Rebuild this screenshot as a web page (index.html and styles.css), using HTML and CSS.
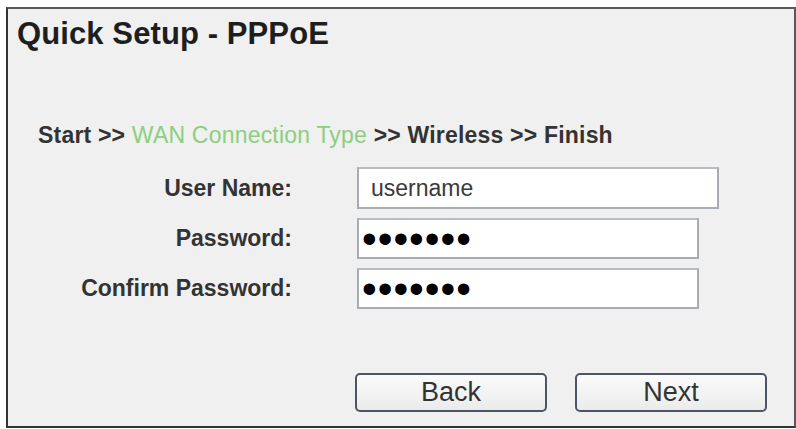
FILE: index.html
```html
<!DOCTYPE html>
<html>
<head>
<meta charset="utf-8">
<title>Quick Setup - PPPoE</title>
<link rel="stylesheet" href="styles.css">
</head>
<body>
<div class="panel">
  <h1 class="title">Quick Setup - PPPoE</h1>
  <p class="steps">Start &gt;&gt; <span class="current">WAN Connection Type</span> &gt;&gt; Wireless &gt;&gt; Finish</p>
  <div class="form">
    <label class="label">User Name:</label>
    <div class="field field-wide">username</div>
    <label class="label">Password:</label>
    <div class="field field-dots">•••••••</div>
    <label class="label">Confirm Password:</label>
    <div class="field field-dots">•••••••</div>
  </div>
  <div class="actions">
    <button class="btn" type="button">Back</button>
    <button class="btn" type="button">Next</button>
  </div>
</div>
</body>
</html>
```

FILE: styles.css
```css
html, body {
  margin: 0;
  padding: 0;
  background: #ffffff;
}

body {
  font-family: "Liberation Sans", Arial, sans-serif;
  color: #333333;
}

.panel {
  box-sizing: border-box;
  width: 790px;
  height: 421px;
  margin: 7px 0 0 6px;
  background: #f0f0f0;
  border: 2px solid #5a5a5a;
  border-left-color: #333333;
  border-bottom-color: #333333;
}

.title {
  margin: 0;
  padding: 7px 0 0 9px;
  font-size: 31px;
  line-height: 36px;
  font-weight: bold;
  letter-spacing: 0.1px;
  color: #1e1e1e;
}

.steps {
  margin: 70px 0 0 30px;
  font-size: 23px;
  line-height: 26px;
  font-weight: bold;
  letter-spacing: 0.2px;
  color: #333333;
}

.steps .current {
  font-weight: normal;
  color: #8ccf7e;
}

.form {
  display: grid;
  grid-template-columns: 284px auto;
  column-gap: 65px;
  row-gap: 9px;
  align-items: center;
  margin-top: 19px;
}

.label {
  text-align: right;
  font-size: 23px;
  font-weight: bold;
  color: #333333;
}

.field {
  box-sizing: border-box;
  width: 342px;
  height: 41px;
  padding-left: 12px;
  background: #ffffff;
  border: 2px solid #a8adb3;
  border-top-color: #b8bcc0;
  font-size: 23px;
  line-height: 37px;
  color: #3a3a3a;
}

.field-wide {
  width: 362px;
  height: 42px;
  line-height: 38px;
}

.field-dots {
  padding-left: 3px;
  font-size: 42px;
  letter-spacing: 1px;
  color: #000000;
}

.actions {
  display: flex;
  gap: 28px;
  margin: 64px 0 0 347px;
}

.btn {
  box-sizing: border-box;
  width: 192px;
  height: 39px;
  padding: 0;
  border: 2px solid #4e5562;
  border-radius: 5px;
  background: linear-gradient(#fbfbfb, #ebebeb);
  font-family: "Liberation Sans", Arial, sans-serif;
  font-size: 27px;
  color: #333333;
}
```
